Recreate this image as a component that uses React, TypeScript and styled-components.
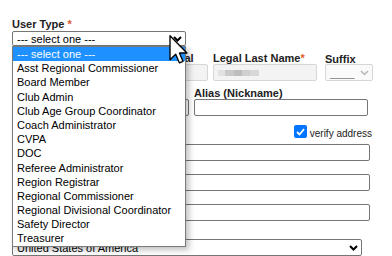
import React from "react";
import styled, { createGlobalStyle } from "styled-components";

const Global = createGlobalStyle`
  html, body { margin: 0; padding: 0; background: #fff; }
  body { font-family: "Liberation Sans", Arial, sans-serif; font-size: 11px; color: #222; }
`;

const Page = styled.div`
  position: relative;
  width: 392px;
  height: 256px;
  overflow: hidden;
  padding: 18px 0 0 12px;
  box-sizing: border-box;
  display: flex;
  flex-direction: column;
`;

const Row = styled.div<{ $mt?: number; $justify?: string; $w?: number }>`
  display: flex;
  align-items: flex-start;
  margin-top: ${(p) => p.$mt ?? 0}px;
  justify-content: ${(p) => p.$justify ?? "flex-start"};
  width: ${(p) => (p.$w ? `${p.$w}px` : "auto")};
  flex: none;
`;

const Field = styled.div<{ $w: number; $ml?: number }>`
  display: flex;
  flex-direction: column;
  width: ${(p) => p.$w}px;
  margin-left: ${(p) => p.$ml ?? 0}px;
  flex: none;
`;

const Label = styled.div<{ $lh?: number; $pt?: number; $pl?: number }>`
  font-weight: bold;
  font-size: 11px;
  line-height: ${(p) => p.$lh ?? 11}px;
  padding-top: ${(p) => p.$pt ?? 0}px;
  padding-left: ${(p) => p.$pl ?? 0}px;
  color: #222;
  white-space: nowrap;
`;

const Req = styled.span`
  color: #e4572e;
  font-weight: bold;
`;

const Input = styled.div<{ $w?: number; $disabled?: boolean }>`
  box-sizing: border-box;
  height: 17px;
  width: ${(p) => (p.$w ? `${p.$w}px` : "100%")};
  border: 1px solid ${(p) => (p.$disabled ? "#d6d6d6" : "#767676")};
  background: ${(p) => (p.$disabled ? "#f3f3f3" : "#fff")};
  border-radius: 2px;
  display: flex;
  align-items: center;
  flex: none;
`;

const SelectBox = styled.div<{ $w: number; $disabled?: boolean; $h?: number; $mt?: number }>`
  box-sizing: border-box;
  height: ${(p) => p.$h ?? 17}px;
  width: ${(p) => p.$w}px;
  margin-top: ${(p) => p.$mt ?? 0}px;
  border: 1px solid ${(p) => (p.$disabled ? "#d6d6d6" : "#767676")};
  background: ${(p) => (p.$disabled ? "#fafafa" : "#fff")};
  border-radius: 2px;
  display: flex;
  align-items: center;
  justify-content: space-between;
  padding: 0 3px 0 4px;
  font-size: 11px;
  color: ${(p) => (p.$disabled ? "#777" : "#000")};
  white-space: nowrap;
  flex: none;
`;

const Redacted = styled.div`
  margin-left: 4px;
  width: 41px;
  height: 6px;
  background: linear-gradient(
    90deg,
    #e2e2e2 0 18%,
    #c9c9c9 18% 40%,
    #bdbdbd 40% 58%,
    #cfcfcf 58% 78%,
    #d8d8d8 78% 100%
  );
  filter: blur(0.5px);
`;

const CheckBox = styled.span`
  box-sizing: border-box;
  width: 13px;
  height: 13px;
  border-radius: 2px;
  background: #0075ff;
  display: inline-flex;
  align-items: center;
  justify-content: center;
  margin-right: 3px;
  flex: none;
`;

const VerifyText = styled.span`
  font-size: 10px;
  line-height: 13px;
  color: #222;
  padding-top: 2px;
`;

const List = styled.div`
  position: absolute;
  left: 12px;
  top: 46px;
  width: 174px;
  box-sizing: border-box;
  border: 1px solid #7a7a7a;
  background: #fff;
  box-shadow: 3px 3px 6px rgba(0, 0, 0, 0.25);
  display: flex;
  flex-direction: column;
`;

const Option = styled.div<{ $selected?: boolean }>`
  height: 14.2px;
  line-height: 14.2px;
  padding-left: 4px;
  font-size: 11px;
  white-space: nowrap;
  color: ${(p) => (p.$selected ? "#fff" : "#000")};
  background: ${(p) => (p.$selected ? "#1e90ff" : "transparent")};
`;

const Cursor = styled.svg`
  position: absolute;
  left: 169px;
  top: 35px;
`;

const Chevron = ({ color = "#000", sw = 2 }: { color?: string; sw?: number }) => (
  <svg width={9} height={6} viewBox="0 0 9 6">
    <path d="M1 1 L4.5 4.5 L8 1" fill="none" stroke={color} strokeWidth={sw} />
  </svg>
);

const options = [
  "--- select one ---",
  "Asst Regional Commissioner",
  "Board Member",
  "Club Admin",
  "Club Age Group Coordinator",
  "Coach Administrator",
  "CVPA",
  "DOC",
  "Referee Administrator",
  "Region Registrar",
  "Regional Commissioner",
  "Regional Divisional Coordinator",
  "Safety Director",
  "Treasurer",
];

export default function App() {
  return (
    <>
      <Global />
      <Page>
        <Field $w={174}>
          <Label $lh={13}>
            User Type <Req>*</Req>
          </Label>
          <SelectBox $w={174} $h={15}>
            <span>--- select one ---</span>
            <Chevron />
          </SelectBox>
        </Field>

        <Row $mt={7}>
          <Field $w={106}>
            <Label>
              Legal First Name<Req>*</Req>
            </Label>
            <Input $disabled />
          </Field>
          <Field $w={85} $ml={5}>
            <Label $pl={4}>Middle Initial</Label>
            <Input $disabled />
          </Field>
          <Field $w={104} $ml={5}>
            <Label>
              Legal Last Name<Req>*</Req>
            </Label>
            <Input $disabled>
              <Redacted />
            </Input>
          </Field>
          <Field $w={48} $ml={8}>
            <Label $pt={1}>Suffix</Label>
            <SelectBox $w={48} $disabled $mt={-1}>
              <span>____</span>
              <Chevron color="#b5b5b5" sw={1.5} />
            </SelectBox>
          </Field>
        </Row>

        <Row $mt={7}>
          <Field $w={177}>
            <Label>Preferred Name</Label>
            <Input />
          </Field>
          <Field $w={174} $ml={5}>
            <Label>Alias (Nickname)</Label>
            <Input />
          </Field>
        </Row>

        <Row $mt={9} $justify="flex-end" $w={360}>
          <CheckBox>
            <svg width="9" height="8" viewBox="0 0 9 8">
              <path d="M1 4 L3.5 6.5 L8 1.2" fill="none" stroke="#fff" strokeWidth="1.8" />
            </svg>
          </CheckBox>
          <VerifyText>verify address</VerifyText>
        </Row>

        <Row $mt={4}>
          <Input $w={358} />
        </Row>
        <Row $mt={13}>
          <Input $w={358} />
        </Row>
        <Row $mt={13}>
          <Input $w={358} />
        </Row>
        <Row $mt={18}>
          <SelectBox $w={350}>
            <span>United States of America</span>
            <Chevron />
          </SelectBox>
        </Row>

        <List>
          {options.map((o, i) => (
            <Option key={o} $selected={i === 0}>
              {o}
            </Option>
          ))}
        </List>

        <Cursor width="20" height="30" viewBox="0 0 13 20">
          <path
            d="M0.5 0.5 L0.5 16.5 L4.3 12.8 L6.8 18.6 L9.2 17.6 L6.8 12 L11.8 12 Z"
            fill="#fff"
            stroke="#000"
            strokeWidth="0.9"
            strokeLinejoin="round"
          />
        </Cursor>
      </Page>
    </>
  );
}
